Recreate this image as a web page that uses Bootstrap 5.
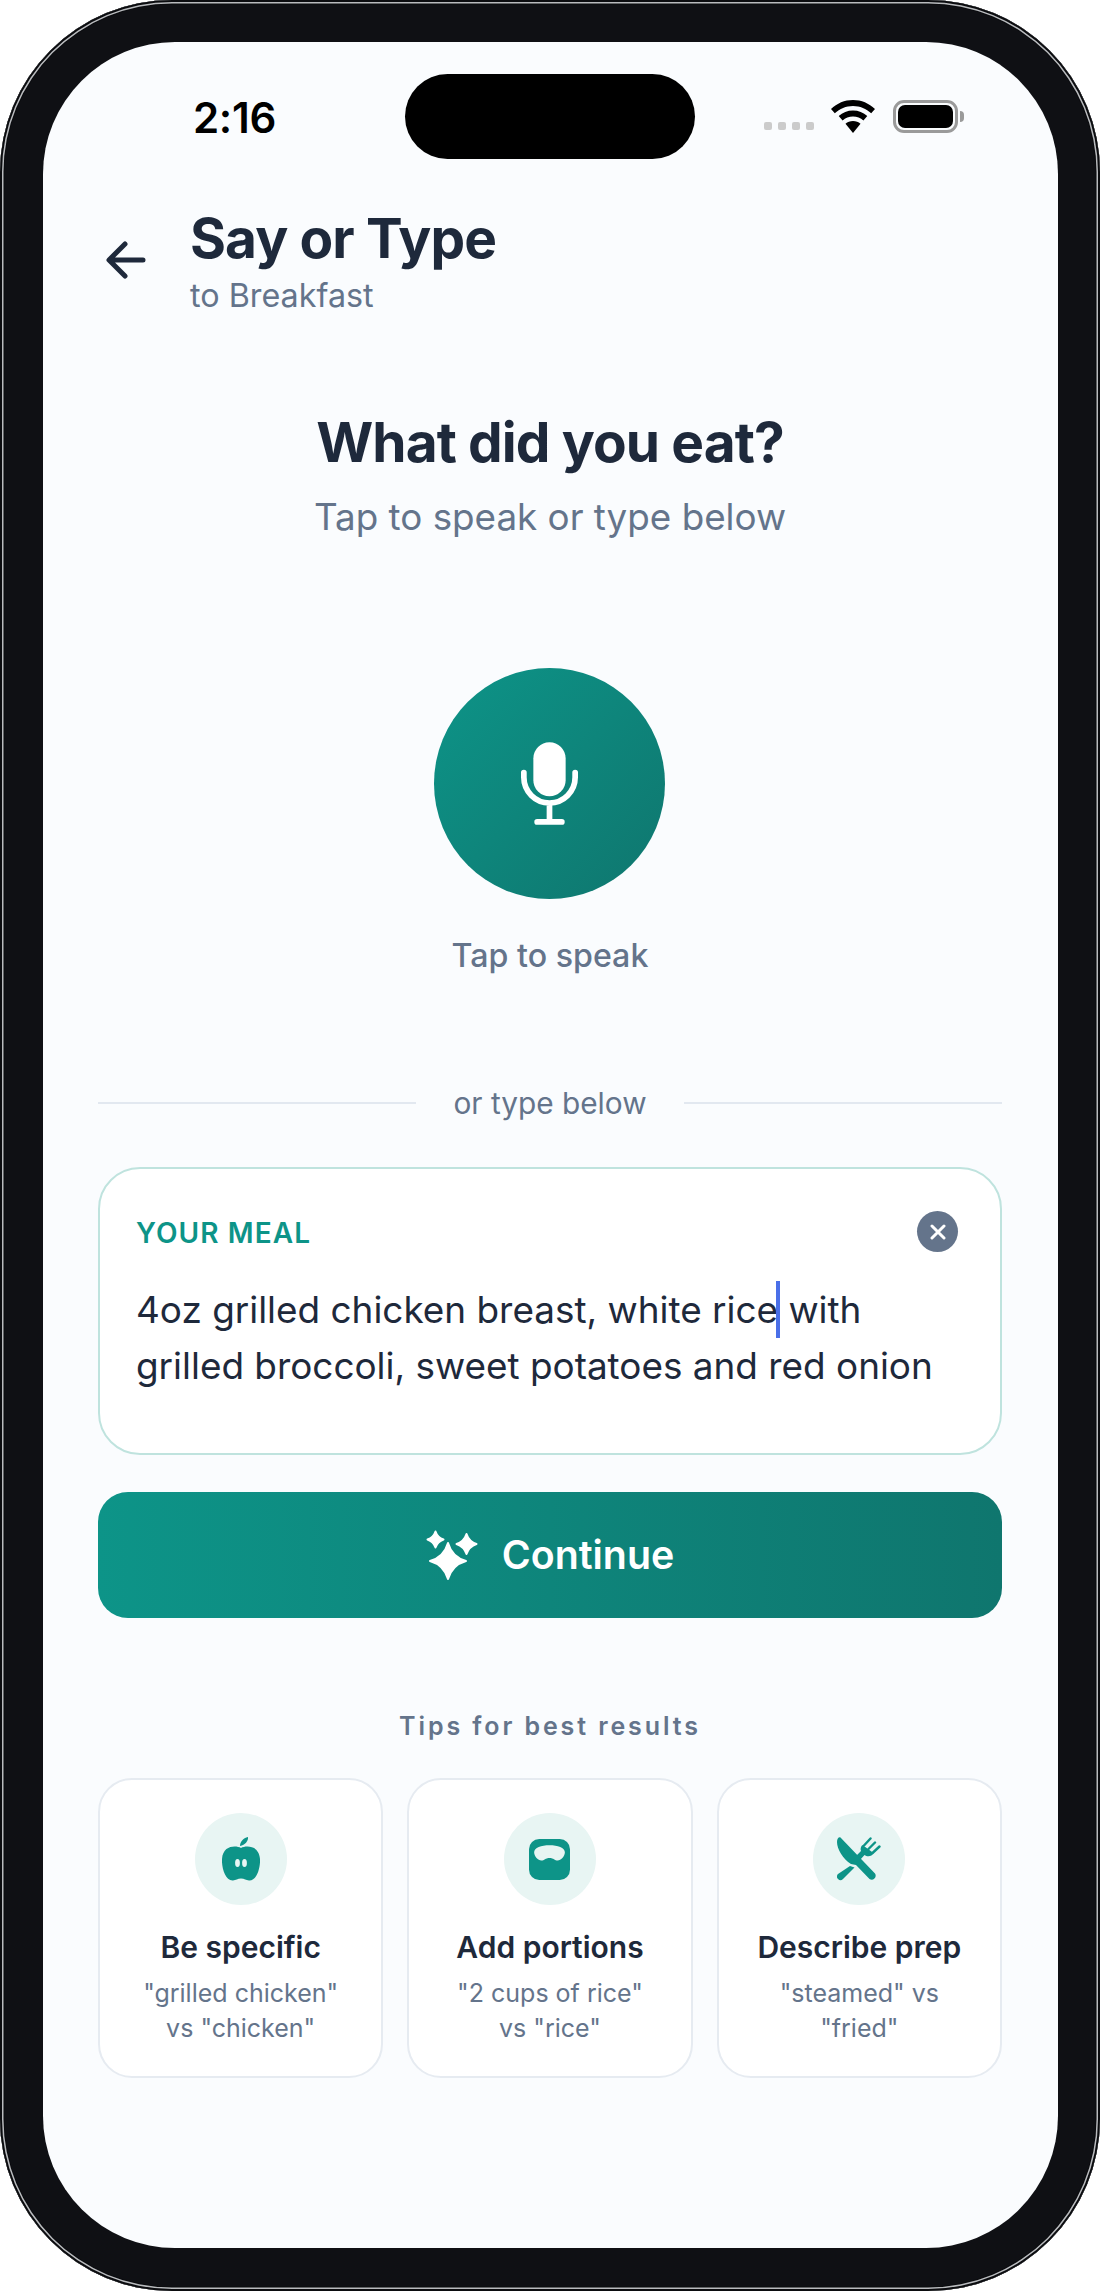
<!DOCTYPE html>
<html lang="en">
<head>
<meta charset="utf-8">
<title>Say or Type</title>
<link href="https://cdn.jsdelivr.net/npm/bootstrap@5.3.0/dist/css/bootstrap.min.css" rel="stylesheet">
<style>
  html, body { margin: 0; background: #fff; }
  body { font-family: Inter, "Liberation Sans", sans-serif; color: #1e293b; }

  /* Device shell */
  .phone-shell {
    width: 1100px; height: 2291px; padding: 42px 42px 43px 43px;
    background: #0f1014; border-radius: 172px;
    box-shadow: inset 0 0 0 2px #0b0c0f, inset 0 0 0 3.5px #b9bbbe, inset 0 0 0 4.5px #0b0c0f;
  }
  .phone-screen {
    height: 100%; background: #fafcfe; border-radius: 132px; position: relative;
    padding: 0 56px 0 55px; overflow: hidden;
  }
  .dyn-island {
    position: absolute; left: 362px; top: 32px; width: 290px; height: 85px;
    background: #000; border-radius: 43px;
  }

  /* Status bar */
  .status-row { height: 108px; padding-top: 52px; margin: 0 -1px; }
  .clock { font-size: 42px; font-weight: 600; line-height: 48px; color: #000; margin-left: 96px; letter-spacing: -.3px; }
  .status-right { margin-right: 39px; margin-top: 6px; }
  .sig-dot { width: 8px; height: 8px; border-radius: 2px; background: #cbcbcb; }
  .sig-dots { gap: 6px; margin: 22px 17px 0 0; }
  .batt-body {
    width: 65px; height: 33px; border: 3px solid #9a9a9a; border-radius: 11px; padding: 2px; margin-left: 18px;
  }
  .batt-fill { height: 100%; background: #000; border-radius: 7px; }
  .batt-nub { width: 4px; height: 11px; background: #9a9a9a; border-radius: 0 4px 4px 0; margin: 11px 0 0 2px; }

  /* Screen header */
  .top-head { margin-top: 58px; height: 101px; }
  .back-btn { width: 92px; padding-top: 33px; padding-left: 8px; }
  .page-title { font-size: 55px; font-weight: 700; line-height: 60px; letter-spacing: -.9px; color: #1e293b; margin: 0; }
  .page-sub { font-size: 32.300px; line-height: 40px; color: #64748b; margin-top: 8px; }

  /* Prompt */
  .prompt-title { font-size: 55px; font-weight: 700; line-height: 64px; letter-spacing: -.9px; margin: 101px 0 0; color: #1e293b; }
  .prompt-sub { font-size: 36.800px; line-height: 46px; color: #64748b; margin-top: 20px; }

  .mic-disc {
    width: 231px; height: 231px; border-radius: 50%; margin: 128px 2px 0 0;
    background: linear-gradient(135deg, #0d9488, #0f766e); border: 0;
  }
  .mic-label { font-size: 32.200px; font-weight: 500; line-height: 40px; color: #64748b; margin-top: 37px; }

  /* Divider */
  .or-row { margin-top: 107px; gap: 37px; height: 40px; }
  .or-rule { flex: 1; height: 2px; background: #e2e8f0; }
  .or-text { font-size: 29.800px; line-height: 40px; color: #64748b; }

  /* Meal entry */
  .meal-box {
    height: 288px; margin-top: 44px; padding: 45px 38px 0 36px;
    background: #fff; border: 2.5px solid #bfe3de; border-radius: 42px;
  }
  .meal-label { font-size: 28px; font-weight: 600; letter-spacing: 1.1px; line-height: 36px; color: #0d9488; }
  .clear-btn {
    width: 41px; height: 41px; border-radius: 50%; background: #64748b; border: 0; padding: 0;
    margin-top: -3px; margin-right: 4px;
  }
  .meal-text { font-size: 36.900px; line-height: 55px; color: #1e293b; margin-top: 29px; white-space: nowrap; }
  .caret-mark {
    display: inline-block; width: 4px; height: 57px; background: #4a6fe8; vertical-align: -15px; margin: 0 -2px;
  }

  /* Continue */
  .go-btn {
    height: 126px; margin-top: 37px; width: 100%; gap: 24px; border: 0; border-radius: 30px; padding-top: 2px;
    background: linear-gradient(90deg, #0d9488, #0f766e); color: #fff;
    font-size: 39.300px; font-weight: 600;
  }

  /* Tips */
  .tips-head { font-size: 25px; font-weight: 600; letter-spacing: 2.9px; line-height: 32px; color: #64748b; margin-top: 92px; }
  .tip-row { margin-top: 36px; gap: 24px; }
  .tip-item {
    flex: 1 1 0; height: 300px; padding: 33px 0 0; background: #fff;
    border: 2.5px solid #e6ebf1; border-radius: 34px;
  }
  .tip-disc { width: 92px; height: 92px; border-radius: 50%; background: #e8f5f3; }
  .tip-title { font-size: 30px; font-weight: 600; line-height: 38px; margin-top: 23px; color: #1e293b; }
  .tip-text { font-size: 25px; line-height: 35px; color: #64748b; margin-top: 10px; }
</style>
</head>
<body>
<div class="phone-shell">
  <div class="phone-screen">
    <div class="dyn-island"></div>

    <div class="status-row d-flex justify-content-between align-items-start">
      <span class="clock">2:16</span>
      <div class="status-right d-flex align-items-start">
        <div class="sig-dots d-flex">
          <span class="sig-dot"></span><span class="sig-dot"></span><span class="sig-dot"></span><span class="sig-dot"></span>
        </div>
        <svg width="44" height="33" viewBox="0 0 44 33" aria-hidden="true">
          <path fill="#000" d="M22 0C13.500 0 6 3.300 0 9l3.800 4.300C8.800 8.800 15 6 22 6s13.200 2.800 18.200 7.300L44 9C38 3.300 30.500 0 22 0z"/>
          <path fill="#000" d="M22 10.500c-5.500 0-10.400 2-14.300 5.500l3.900 4.400c2.800-2.400 6.400-3.900 10.400-3.900s7.600 1.500 10.400 3.900l3.900-4.400c-3.900-3.500-8.800-5.500-14.300-5.500z"/>
          <path fill="#000" d="M22 21c-2.900 0-5.500 1-7.500 2.700L22 33l7.500-9.300C27.500 22 24.900 21 22 21z"/>
        </svg>
        <div class="batt-body"><div class="batt-fill"></div></div>
        <div class="batt-nub"></div>
      </div>
    </div>

    <div class="top-head d-flex">
      <div class="back-btn">
        <svg width="40" height="38" viewBox="0 0 40 38" fill="none" stroke="#1e293b" stroke-width="5" stroke-linecap="round" stroke-linejoin="round" aria-hidden="true">
          <path d="M37 19H4M19 3 3 19l16 16"/>
        </svg>
      </div>
      <div>
        <h1 class="page-title">Say or Type</h1>
        <div class="page-sub">to Breakfast</div>
      </div>
    </div>

    <div class="text-center">
      <h2 class="prompt-title">What did you eat?</h2>
      <div class="prompt-sub">Tap to speak or type below</div>
    </div>

    <div class="d-flex flex-column align-items-center">
      <button type="button" class="mic-disc d-flex align-items-center justify-content-center">
        <svg width="57" height="83" viewBox="0 0 60 87" aria-hidden="true">
          <rect x="13" y="0" width="34" height="57" rx="17" fill="#fff"/>
          <path d="M3 32v5a27 27 0 0 0 54 0v-5M30 65v16M17 84h26" fill="none" stroke="#fff" stroke-width="6" stroke-linecap="round"/>
        </svg>
      </button>
      <div class="mic-label">Tap to speak</div>
    </div>

    <div class="or-row d-flex align-items-center">
      <div class="or-rule"></div>
      <span class="or-text">or type below</span>
      <div class="or-rule"></div>
    </div>

    <div class="meal-box">
      <div class="d-flex justify-content-between align-items-center">
        <span class="meal-label">YOUR MEAL</span>
        <button type="button" class="clear-btn d-flex align-items-center justify-content-center" aria-label="Clear">
          <svg width="16" height="16" viewBox="0 0 16 16" fill="none" stroke="#fff" stroke-width="3" stroke-linecap="round" aria-hidden="true"><path d="M2 2l12 12M14 2 2 14"/></svg>
        </button>
      </div>
      <div class="meal-text">4oz grilled chicken breast, white rice<span class="caret-mark"></span> with<br>grilled broccoli, sweet potatoes and red onion</div>
    </div>

    <button type="button" class="go-btn d-flex align-items-center justify-content-center">
      <svg width="52" height="51" viewBox="0 0 52 51" fill="#fff" stroke="#fff" stroke-width="2" stroke-linejoin="round" aria-hidden="true">
        <path d="M22 13Q26 27 40 31 26 35 22 49 18 35 4 31 18 27 22 13z"/>
        <path d="M9.500 1.500Q11.500 7.500 17.500 9.500 11.500 11.500 9.500 17.500 7.500 11.500 1.500 9.500 7.500 7.500 9.500 1.500z"/>
        <path d="M40.500 4Q43 11.500 50.500 14 43 16.500 40.500 24 38 16.500 30.500 14 38 11.500 40.500 4z"/>
      </svg>
      <span>Continue</span>
    </button>

    <div class="tips-head text-center">Tips for best results</div>

    <div class="tip-row d-flex">
      <div class="tip-item text-center">
        <div class="tip-disc d-flex align-items-center justify-content-center mx-auto">
          <svg width="38" height="44" viewBox="0 0 38 44" aria-hidden="true">
            <path fill="#0d9488" d="M19 11C14 8.500 1 8 0 22c-.5 8 3 22 11 21.500 3-.2 4.500-2 8-2s5 1.800 8 2C35 44 38.500 30 38 22 37 8 24 8.500 19 11z"/>
            <path fill="#0d9488" d="M18 9c0-4 3-8 8-9 .5 4-3 8-8 9z"/>
            <ellipse cx="15.500" cy="26" rx="2.400" ry="4" fill="#e8f5f3"/>
            <ellipse cx="22.500" cy="26" rx="2.400" ry="4" fill="#e8f5f3"/>
          </svg>
        </div>
        <div class="tip-title">Be specific</div>
        <div class="tip-text">"grilled chicken"<br>vs "chicken"</div>
      </div>
      <div class="tip-item text-center">
        <div class="tip-disc d-flex align-items-center justify-content-center mx-auto">
          <svg width="41" height="41" viewBox="0 0 40 40" aria-hidden="true">
            <rect width="40" height="40" rx="10" fill="#0d9488"/>
            <path fill="#e8f5f3" d="M20 6C12 6 5 8 5 13c0 4 4 8 7 8s4-2.500 8-2.500S25 21 28 21s7-4 7-8c0-5-7-7-15-7z"/>
          </svg>
        </div>
        <div class="tip-title">Add portions</div>
        <div class="tip-text">"2 cups of rice"<br>vs "rice"</div>
      </div>
      <div class="tip-item text-center">
        <div class="tip-disc d-flex align-items-center justify-content-center mx-auto">
          <svg width="44" height="44" viewBox="0 0 44 44" aria-hidden="true">
            <path fill="#0d9488" d="M3.500.5 38 36.500a4 4 0 0 1-5.500 5.500L19 28l-5-1C6 22 0 12 0 5 0 1.500 2-.5 3.500.5z"/>
            <path fill="#0d9488" d="M13 29l4.500 1.500L6 42a3.500 3.500 0 0 1-5-5z"/>
            <path fill="#0d9488" d="M25.500 8 36.500 16c-1.500 4-6.500 4-9 2L23 23l-4-4 5-5c-1-2 0-5 1.500-6z"/>
            <path fill="none" stroke="#0d9488" stroke-width="2.400" stroke-linecap="round" d="M27 8.500 33.500 1.500M31.500 12 38 5.500M35.500 16 42.500 9.500"/>
          </svg>
        </div>
        <div class="tip-title">Describe prep</div>
        <div class="tip-text">"steamed" vs<br>"fried"</div>
      </div>
    </div>
  </div>
</div>
<script src="https://cdn.jsdelivr.net/npm/bootstrap@5.3.0/dist/js/bootstrap.bundle.min.js"></script>
</body>
</html>
